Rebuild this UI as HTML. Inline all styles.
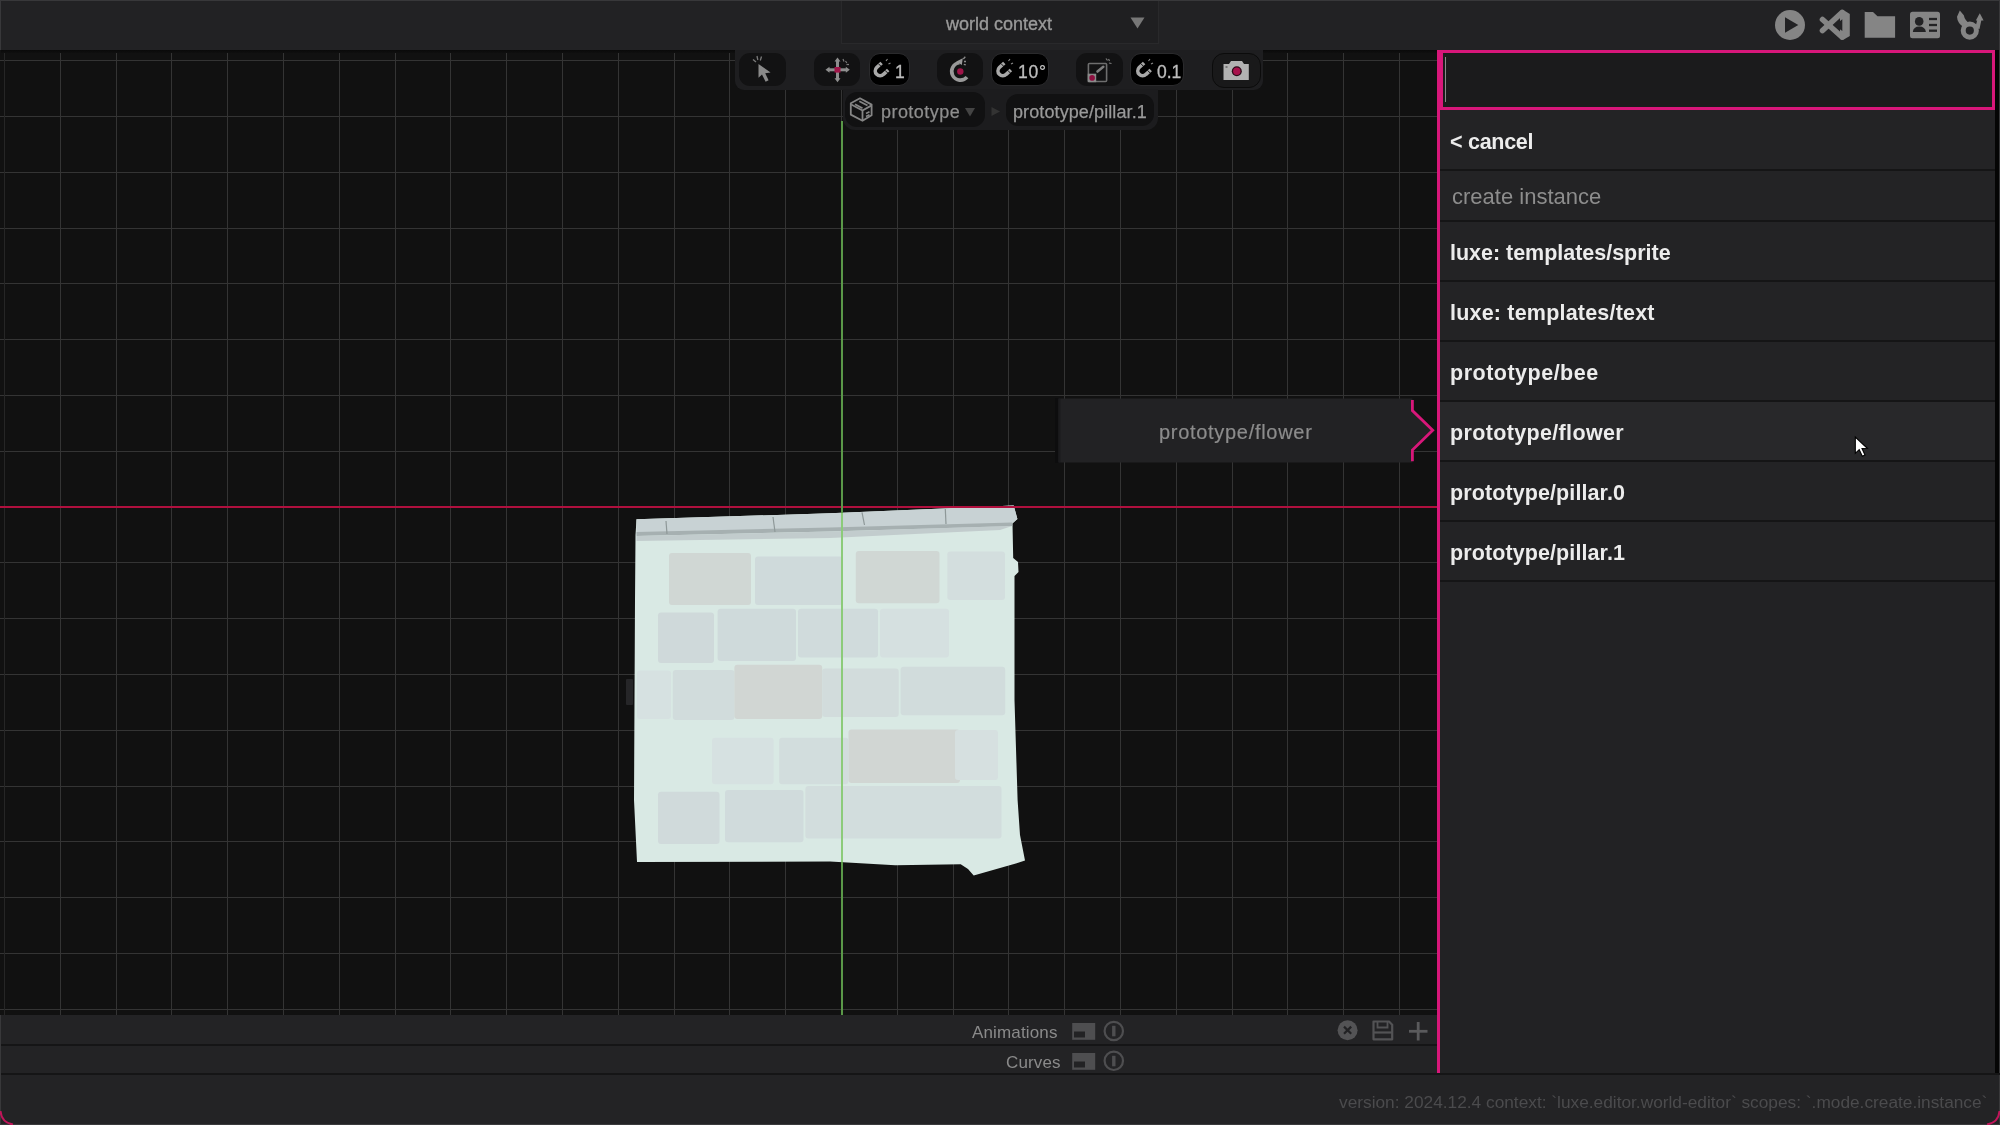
<!DOCTYPE html>
<html><head><meta charset="utf-8">
<style>
html,body{margin:0;padding:0;}
body{width:2000px;height:1125px;overflow:hidden;position:relative;background:#222224;font-family:"Liberation Sans",sans-serif;-webkit-font-smoothing:antialiased;}
.t,.item{will-change:transform;}
.a{position:absolute;}
.t{position:absolute;white-space:pre;line-height:1;}
#topbar{left:0;top:0;width:2000px;height:50px;background:#222224;border-top:1px solid #38383a;box-sizing:border-box;}
#vp{left:0;top:50px;width:1437px;height:965px;background:#111111;overflow:hidden;}
#rp{left:1437px;top:50px;width:558px;height:1024px;background:#222224;}
.row{position:absolute;left:3px;width:555px;background:#232325;}
.sep{position:absolute;left:3px;width:555px;background:#151516;}
.btn{background:#121213;border-radius:11px;}
.blk{background:#000;border:1px solid #2a2a2c;box-sizing:border-box;}
.item{position:absolute;left:13px;color:#ececec;font-weight:bold;font-size:21.5px;letter-spacing:-0.1px;white-space:pre;line-height:1;}
</style></head><body>
<div id="topbar" class="a"></div>
<div class="a" style="left:0;top:0;width:1px;height:1125px;background:#38383a"></div>

<!-- viewport -->
<div id="vp" class="a">
<svg width="1437" height="965" viewBox="0 50 1437 965" style="position:absolute;left:0;top:0" shape-rendering="crispEdges"><g fill="#343434"><rect x="60" y="50" width="1" height="965"/><rect x="116" y="50" width="1" height="965"/><rect x="171" y="50" width="1" height="965"/><rect x="227" y="50" width="1" height="965"/><rect x="283" y="50" width="1" height="965"/><rect x="339" y="50" width="1" height="965"/><rect x="395" y="50" width="1" height="965"/><rect x="450" y="50" width="1" height="965"/><rect x="506" y="50" width="1" height="965"/><rect x="562" y="50" width="1" height="965"/><rect x="618" y="50" width="1" height="965"/><rect x="674" y="50" width="1" height="965"/><rect x="729" y="50" width="1" height="965"/><rect x="785" y="50" width="1" height="965"/><rect x="841" y="50" width="1" height="965"/><rect x="897" y="50" width="1" height="965"/><rect x="953" y="50" width="1" height="965"/><rect x="1008" y="50" width="1" height="965"/><rect x="1064" y="50" width="1" height="965"/><rect x="1120" y="50" width="1" height="965"/><rect x="1176" y="50" width="1" height="965"/><rect x="1232" y="50" width="1" height="965"/><rect x="1287" y="50" width="1" height="965"/><rect x="1343" y="50" width="1" height="965"/><rect x="1399" y="50" width="1" height="965"/><rect x="0" y="60" width="1437" height="1"/><rect x="0" y="116" width="1437" height="1"/><rect x="0" y="172" width="1437" height="1"/><rect x="0" y="228" width="1437" height="1"/><rect x="0" y="283" width="1437" height="1"/><rect x="0" y="339" width="1437" height="1"/><rect x="0" y="395" width="1437" height="1"/><rect x="0" y="451" width="1437" height="1"/><rect x="0" y="562" width="1437" height="1"/><rect x="0" y="618" width="1437" height="1"/><rect x="0" y="674" width="1437" height="1"/><rect x="0" y="730" width="1437" height="1"/><rect x="0" y="786" width="1437" height="1"/><rect x="0" y="841" width="1437" height="1"/><rect x="0" y="897" width="1437" height="1"/><rect x="0" y="953" width="1437" height="1"/><rect x="0" y="1009" width="1437" height="1"/></g></svg>

<div class="a" style="left:4px;top:0;width:1px;height:965px;background:#262626"></div>
<div class="a" style="left:1px;top:0;width:1436px;height:3px;background:linear-gradient(#0a0a0a,#0f0f0f)"></div>
</div>

<!-- pillar -->
<div class="a" style="left:626px;top:678.5px;width:7px;height:26px;background:#262628;border-radius:1px"></div>
<svg class="a" style="left:600px;top:490px" width="450" height="400"><g transform="translate(-600 -490)">
 <path d="M635.5 535 L636.5 519.3 L830 513.3 L1013.7 505.5 L1017.4 519.1 L1012.5 523.5 L1013.2 558 L1018 562 L1018.5 572 L1014.5 576 L1014.5 700 L1017.6 800 L1020 835 L1025 860.5 L1016.7 863.3 L973.7 875.5 L968 869 L960.7 864.3 L895.3 865.2 L830 861.5 L637 862 L634 800 L635 600 Z" fill="#d9e9e4"/>
 <rect x="669" y="553" width="82.0" height="52.0" rx="3" fill="#d0d7d4"/>
 <rect x="755" y="556.5" width="87.7" height="48.5" rx="3" fill="#cfdadb"/>
 <rect x="855.8" y="551" width="83.7" height="52.2" rx="3" fill="#d0d7d4"/>
 <rect x="947.3" y="551.5" width="57.7" height="48.5" rx="3" fill="#d3dede"/>
 <rect x="658" y="612.6" width="56.0" height="50.4" rx="3" fill="#cfd9da"/>
 <rect x="717.6" y="608.8" width="78.4" height="52.2" rx="3" fill="#cfdadb"/>
 <rect x="798" y="608.8" width="80.0" height="48.6" rx="3" fill="#d0dbdc"/>
 <rect x="880" y="608.8" width="69.0" height="48.6" rx="3" fill="#d5e0e0"/>
 <rect x="637" y="670.4" width="34.0" height="48.6" rx="3" fill="#d6e1e1"/>
 <rect x="672.8" y="670" width="61.6" height="50.0" rx="3" fill="#d1dcdc"/>
 <rect x="734.4" y="664.8" width="87.8" height="54.2" rx="3" fill="#d1d6d3"/>
 <rect x="822.2" y="668.6" width="76.5" height="48.4" rx="3" fill="#d2dcdc"/>
 <rect x="900.6" y="666.7" width="104.6" height="48.5" rx="3" fill="#d1dcdc"/>
 <rect x="712" y="737.7" width="61.6" height="46.6" rx="3" fill="#d6e1e1"/>
 <rect x="779.2" y="737.7" width="69.1" height="46.6" rx="3" fill="#d2dddd"/>
 <rect x="848.5" y="729.5" width="111.5" height="53.5" rx="3" fill="#d1d6d3"/>
 <rect x="955" y="730" width="43.0" height="50.0" rx="3" fill="#d6e0e0"/>
 <rect x="658" y="791.8" width="61.5" height="52.2" rx="3" fill="#d0dadb"/>
 <rect x="725" y="790" width="78.5" height="52.2" rx="3" fill="#d0dbdc"/>
 <rect x="805.4" y="786" width="196.1" height="52.5" rx="3" fill="#d2dddd"/>
 <path d="M636.5 519.3 L830 513.3 L1013.7 505.5 L1017.4 519.1 L1012.2 523.3 L1000 529.6 L830 529.6 L636.5 534.5 Z" fill="#c8d2d4"/>
 <path d="M636.5 532 L830 527.5 L1012.2 522.5 L1012.2 526 L830 531.5 L636.5 536 Z" fill="#a6b0b1"/>
 <path d="M636.5 536 L830 531.5 L1012.2 526 L1000 530 L830 538 L636.5 541 Z" fill="#c2cccd"/>
 <g stroke="#8e9898" stroke-width="1.2"><path d="M666 521 L667 534"/><path d="M773 517 L775 532"/><path d="M862 512.3 L864.5 525"/><path d="M945.3 509 L946 524"/></g>
</g></svg>
<div class="a" style="left:0;top:506px;width:1437px;height:2px;background:#b0103e"></div>
<div class="a" style="left:841px;top:121px;width:2px;height:894px;background:#5a9848"></div>
<div class="a" style="left:841px;top:513px;width:2px;height:349px;background:#8ccb7a"></div>

<!-- top bar content -->
<!-- world context dropdown -->
<div class="a" style="left:841px;top:1px;width:318px;height:43px;box-sizing:border-box;border:1px solid #29292b;border-top:none;background:#1f1f21"></div>
<div class="t" style="left:946px;top:14.5px;font-size:18px;color:#9a9a9a;-webkit-text-stroke:0.35px #9a9a9a">world context</div>
<svg class="a" style="left:1130px;top:17px" width="15" height="12"><path d="M0.5 0.5 L14.5 0.5 L7.5 11.5 Z" fill="#777"/></svg>

<!-- top right icons -->
<svg class="a" style="left:1760px;top:0" width="240" height="50"><g transform="translate(-1760 0)">
 <circle cx="1790" cy="25" r="15" fill="#858585"/>
 <path d="M1785 17.3 L1785 32.7 L1798.3 25 Z" fill="#222224"/>
 <g stroke="#858585" stroke-width="5.6" stroke-linecap="round"><path d="M1822.5 19.5 L1842 37"/><path d="M1822.5 30.5 L1842 12.5"/></g>
 <path d="M1840 11 L1843 9.8 L1849.8 14 L1849.8 36 L1843 40 L1840 39 Z" fill="#858585"/>
 <path d="M1842.3 19.3 L1842.3 31 L1834.6 25.2 Z" fill="#222224"/>
 <path d="M1864.7 12 L1873 12 L1877.5 16.2 L1895.1 16.2 L1895.1 37.7 L1864.7 37.7 Z" fill="#858585"/>
 <rect x="1910" y="11.7" width="30" height="26.5" rx="2.5" fill="#858585"/>
 <circle cx="1919.2" cy="21.4" r="4.3" fill="#222224"/>
 <path d="M1912.8 32 Q1913.5 26.5 1919.3 26.5 Q1925.2 26.5 1925.9 32 Z" fill="#222224"/>
 <g stroke="#222224" stroke-width="2.3"><path d="M1929 19 L1937 19"/><path d="M1929 25 L1937 25"/><path d="M1929 30.7 L1937 30.7"/></g>
 <circle cx="1969.8" cy="30.6" r="6.6" stroke="#858585" stroke-width="5" fill="none"/>
 <path d="M1957 16.8 L1959.8 10.6 L1963.8 15.2 Q1964.8 20.3 1969.5 23.2 L1964.5 27.8 Q1957.2 23.5 1957 16.8 Z" fill="#858585"/>
 <path d="M1975.2 28 L1977.5 19 L1981.5 19.5 L1979.5 29 Z" fill="#858585"/>
 <path d="M1975.8 20.5 L1983.6 20.5 L1979.8 13.3 Z" fill="#858585"/>
</g></svg>

<!-- toolbar panel -->
<div class="a" style="left:735px;top:50px;width:528px;height:40px;background:#1e1e20;border-radius:0 0 9px 9px"></div>
<div class="a btn" style="left:739px;top:53px;width:47px;height:33px"></div>
<div class="a btn" style="left:814px;top:53px;width:46px;height:33px"></div>
<div class="a btn blk" style="left:869px;top:53px;width:41px;height:33px"></div>
<div class="a btn" style="left:937px;top:53px;width:46px;height:33px"></div>
<div class="a btn blk" style="left:991px;top:53px;width:58px;height:33px"></div>
<div class="a btn" style="left:1076px;top:53px;width:47px;height:33px"></div>
<div class="a btn blk" style="left:1130px;top:53px;width:54px;height:33px"></div>
<div class="a btn" style="left:1211.5px;top:53px;width:49.5px;height:34.5px;background:#19191a;border:1.5px solid #0b0b0b;box-sizing:border-box;border-radius:12px"></div>
<svg class="a" style="left:0;top:0" width="1300" height="100">
 <g fill="#8a8a8a"><path d="M758.5 64 L758.5 77.8 L762 74.6 L765.6 81.8 L768.6 80.3 L765.2 73.2 L770.6 72.6 Z"/></g>
 <g stroke="#7a7a7a" stroke-width="1.3" fill="none"><path d="M753 59.5 L756 62"/><path d="M757 56 L757.8 60"/><path d="M761.5 56.5 L760.3 60.5"/></g>
 <!-- move -->
 <g stroke="#8e8e8e" stroke-width="3" fill="none"><path d="M828 69.8 L847 69.8"/><path d="M837.5 60.5 L837.5 79.5"/></g>
 <g fill="#8e8e8e"><path d="M825.5 69.8 L829.5 66.8 L829.5 72.8 Z"/><path d="M849.8 69.8 L845.8 66.8 L845.8 72.8 Z"/><path d="M837.5 57.5 L834.5 61.5 L840.5 61.5 Z"/><path d="M837.5 82.3 L834.5 78.3 L840.5 78.3 Z"/></g>
 <rect x="834.5" y="67" width="6" height="5.6" fill="#a01448"/>
 <g stroke="#7a7a7a" stroke-width="1.2" fill="none"><path d="M843 59 L844 61.5"/><path d="M845.5 61 L846.8 63"/><path d="M846.5 64.5 L849 64.5"/></g>
 <!-- rotate -->
 <path d="M959.5 62.8 A8.7 8.7 0 1 0 967 77.1" stroke="#999" stroke-width="3.6" fill="none"/>
 <path d="M956.3 61.5 L962.8 58.3 L961.8 65 Z" fill="#999"/>
 <circle cx="960.3" cy="71.5" r="3.2" fill="#9e1448"/>
 <g stroke="#8a8a8a" stroke-width="1.3" fill="none"><path d="M963.3 59 L965.3 56.8"/><path d="M964 61.5 L966 61.5"/><path d="M963.8 64.3 L965.8 64.8"/></g>
 <!-- scale -->
 <rect x="1088.4" y="63.5" width="18.2" height="18" rx="1" stroke="#6e6e6e" stroke-width="1.6" fill="none"/>
 <rect x="1087.7" y="73.7" width="8.5" height="8.5" fill="#8a8a8a"/>
 <circle cx="1092.1" cy="77.9" r="2.8" fill="#8e1040"/>
 <path d="M1097.5 71.5 L1103.3 66.8" stroke="#7e7e7e" stroke-width="2.6" stroke-linecap="round"/>
 <g stroke="#7a7a7a" stroke-width="1.2" fill="none"><path d="M1106 58.5 L1107.5 60.5"/><path d="M1108.5 59 L1109.5 61"/><path d="M1109 63 L1111.5 63.5"/></g>
 <!-- camera -->
 <path d="M1223.5 64 L1229 64 L1231 61 L1242 61 L1244 64 L1248.8 64 L1248.8 80 L1223.5 80 Z" fill="#b2b2b2"/>
 <circle cx="1236.8" cy="71.3" r="5" fill="#2a0c18"/>
 <circle cx="1236.8" cy="71.3" r="3.7" fill="#a8124c"/>
 <rect x="1225.5" y="66" width="2" height="2" fill="#777"/>
 <!-- magnets -->
 <g stroke="#a8a8a8" stroke-width="3.6" fill="none">
  <path transform="translate(0 0)" d="M881.6 63 L876.7 67.5 A4.8 4.8 0 0 0 883.5 74.3 L888.2 70"/>
  <path transform="translate(122.7 0)" d="M881.6 63 L876.7 67.5 A4.8 4.8 0 0 0 883.5 74.3 L888.2 70"/>
  <path transform="translate(262.5 0)" d="M881.6 63 L876.7 67.5 A4.8 4.8 0 0 0 883.5 74.3 L888.2 70"/>
 </g>
 <g transform="translate(0 0)" stroke="#000" stroke-width="0.9"><path d="M878.3 63.6 L881.5 66.8"/><path d="M885 70.3 L888.2 73.5"/></g>
 <g transform="translate(122.7 0)" stroke="#000" stroke-width="0.9"><path d="M878.3 63.6 L881.5 66.8"/><path d="M885 70.3 L888.2 73.5"/></g>
 <g transform="translate(262.5 0)" stroke="#000" stroke-width="0.9"><path d="M878.3 63.6 L881.5 66.8"/><path d="M885 70.3 L888.2 73.5"/></g>
 <g stroke="#8a8a8a" stroke-width="1.1" fill="none">
  <path d="M886 61 L887.5 59"/><path d="M888.5 64 L890.5 63"/>
  <path d="M1008.5 61 L1010 59"/><path d="M1011 64 L1013 63"/>
  <path d="M1148.5 61 L1150 59"/><path d="M1151 64 L1153 63"/>
 </g>
</svg>
<div class="t" style="left:894.5px;top:63.5px;font-size:17.5px;color:#bdbdbd;-webkit-text-stroke:0.3px #bdbdbd">1</div>
<div class="t" style="left:1017.5px;top:63.5px;font-size:17.5px;letter-spacing:0.8px;color:#bdbdbd;-webkit-text-stroke:0.3px #bdbdbd">10°</div>
<div class="t" style="left:1156.5px;top:63.5px;font-size:17.5px;color:#bdbdbd;-webkit-text-stroke:0.3px #bdbdbd">0.1</div>


<!-- breadcrumb -->
<div class="a" style="left:843px;top:89px;width:315px;height:41px;background:#1c1c1e;border-radius:0 0 12px 12px"></div>
<div class="a" style="left:845px;top:92px;width:140px;height:35px;background:#111112;border-radius:12px"></div>
<div class="a" style="left:1006px;top:94px;width:148px;height:32px;background:#111112;border-radius:12px"></div>
<svg class="a" style="left:0;top:0" width="1000" height="140"><g stroke="#858585" stroke-width="1.8" fill="none" stroke-linejoin="round">
<path d="M860 98.3 L871.6 104.6 L871.6 115.3 L862.5 120.8 L850.8 114.6 L850.8 103.2 Z"/>
<path d="M851.2 104.5 L862.5 110.5 L871.2 105.6"/><path d="M862.5 110.5 L862.5 120.5"/>
<path d="M855 104.2 L862.5 108.2"/><path d="M859.3 101.2 L867.5 105.5"/>
<path d="M866 113.5 L869.5 111.8"/><path d="M866 116.5 L869.5 114.8"/>
</g></svg>
<div class="t" style="left:881px;top:103px;font-size:18px;letter-spacing:0.45px;color:#8e8e8e;-webkit-text-stroke:0.25px #8e8e8e">prototype</div>
<svg class="a" style="left:965px;top:108px" width="11" height="9"><path d="M0 0 L10 0 L5 8.5 Z" fill="#444"/></svg>
<svg class="a" style="left:991px;top:107px" width="10" height="10"><path d="M0.5 0 L9 4.5 L0.5 9 Z" fill="#333"/></svg>
<div class="t" style="left:1013px;top:102.5px;font-size:18px;letter-spacing:0.1px;color:#9a9a9a;-webkit-text-stroke:0.25px #9a9a9a">prototype/pillar.1</div>


<!-- ghost tooltip -->
<div class="a" style="left:1055px;top:398px;width:6px;height:65px;background:#0d0d0e"></div>
<svg class="a" style="left:1050px;top:390px" width="390" height="80"><g transform="translate(-1050 -390)">
 <path d="M1058.5 398.6 L1412.4 398.6 L1412.4 410.6 L1432.7 430.3 L1412.4 450.1 L1412.4 462.4 L1058.5 462.4 Z" fill="#222224"/>
 <path d="M1058.5 398.6 L1060.5 398.6 L1060.5 462.4 L1058.5 462.4 Z" fill="#1b1b1d"/>
 <path d="M1412.4 400 L1412.4 410.6 L1432.7 430.3 L1412.4 450.1 L1412.4 461.2" stroke="#d8177a" stroke-width="2.8" fill="none" stroke-linejoin="miter"/>
</g></svg>
<div class="t" style="left:1159px;top:421.9px;font-size:20px;letter-spacing:0.7px;color:#8c8c8c;-webkit-text-stroke:0.2px #8c8c8c">prototype/flower</div>

<!-- right panel -->
<div id="rp" class="a">
  <div class="a" style="left:0;top:0;width:3px;height:1024px;background:#d8177a"></div>
  <div class="a" style="left:3px;top:0;width:555px;height:60px;box-sizing:border-box;border:3px solid #d8177a;background:#1b1b1c"></div>
  <div class="a" style="left:8px;top:7px;width:1px;height:45px;background:#8a8a8a"></div>
  <div class="row" style="top:60px;height:59px"></div>
  <div class="sep" style="top:119px;height:2px"></div>
  <div class="row" style="top:121px;height:49px"></div>
  <div class="sep" style="top:170px;height:2px"></div>
  <div class="row" style="top:172px;height:58px"></div>
  <div class="sep" style="top:230px;height:2px"></div>
  <div class="row" style="top:232px;height:58px"></div>
  <div class="sep" style="top:290px;height:2px"></div>
  <div class="row" style="top:292px;height:58px"></div>
  <div class="sep" style="top:350px;height:2px"></div>
  <div class="row" style="top:352px;height:58px;background:#28282a"></div>
  <div class="sep" style="top:410px;height:2px"></div>
  <div class="row" style="top:412px;height:58px"></div>
  <div class="sep" style="top:470px;height:2px"></div>
  <div class="row" style="top:472px;height:58px"></div>
  <div class="sep" style="top:530px;height:2px"></div>
  <div class="item" style="top:81.8px;left:13px;letter-spacing:-0.28px">&lt; cancel</div>
  <div class="t" style="top:136px;left:15px;font-size:22px;color:#8d8d8d">create instance</div>
  <div class="item" style="top:193.1px;letter-spacing:-0.02px">luxe: templates/sprite</div>
  <div class="item" style="top:253.1px;letter-spacing:0.2px">luxe: templates/text</div>
  <div class="item" style="top:313.1px;letter-spacing:0.5px">prototype/bee</div>
  <div class="item" style="top:373.1px;letter-spacing:0.35px">prototype/flower</div>
  <div class="item" style="top:433.1px;letter-spacing:0.1px">prototype/pillar.0</div>
  <div class="item" style="top:493.1px;letter-spacing:0.1px">prototype/pillar.1</div>
</div>
<div class="a" style="left:1995px;top:50px;width:4px;height:1025px;background:#050505"></div>
<div class="a" style="left:1999px;top:0;width:1px;height:1125px;background:#38383a"></div>

<!-- bottom bars -->
<div class="a" style="left:1px;top:1015px;width:1436px;height:29px;background:#232325"></div>
<div class="a" style="left:1px;top:1044px;width:1436px;height:2px;background:#151516"></div>
<div class="a" style="left:1px;top:1046px;width:1436px;height:27px;background:#232325"></div>
<div class="a" style="left:1px;top:1073px;width:1999px;height:2px;background:#151516"></div>
<div class="a" style="left:1px;top:1075px;width:1998px;height:50px;background:#232325"></div>
<!-- bottom bar content -->
<div class="t" style="left:972px;top:1023.8px;font-size:17px;letter-spacing:0.15px;color:#8a8a8a">Animations</div>
<div class="t" style="left:1005.5px;top:1054.3px;font-size:17px;letter-spacing:0.15px;color:#8a8a8a">Curves</div>
<svg class="a" style="left:0;top:0" width="1440" height="1125">
 <g>
  <rect x="1072.2" y="1023" width="23" height="16.8" fill="#4e4e50"/>
  <rect x="1074" y="1031.5" width="11" height="6" fill="#222224"/>
  <circle cx="1113.8" cy="1031" r="9.2" stroke="#4e4e50" stroke-width="2.2" fill="none"/>
  <rect x="1112.1" y="1025.8" width="3.4" height="10.5" fill="#4e4e50"/>
  <rect x="1072.2" y="1053" width="23" height="16.8" fill="#4e4e50"/>
  <rect x="1074" y="1061.5" width="11" height="6" fill="#222224"/>
  <circle cx="1113.8" cy="1060.8" r="9.2" stroke="#4e4e50" stroke-width="2.2" fill="none"/>
  <rect x="1112.1" y="1055.8" width="3.4" height="10.5" fill="#4e4e50"/>
 </g>
 <circle cx="1347.6" cy="1030.2" r="10" fill="#535355"/>
 <g stroke="#222224" stroke-width="2.2"><path d="M1344 1026.6 L1351.2 1033.8"/><path d="M1351.2 1026.6 L1344 1033.8"/></g>
 <path d="M1373.5 1021.5 L1389 1021.5 L1392.2 1024.7 L1392.2 1039.3 L1373.5 1039.3 Z" stroke="#535355" stroke-width="2.2" fill="none" stroke-linejoin="round"/>
 <path d="M1377.5 1022 L1377.5 1027.5 L1387.5 1027.5 L1387.5 1022" stroke="#535355" stroke-width="1.8" fill="none"/>
 <path d="M1373.5 1032.5 L1392.2 1032.5" stroke="#535355" stroke-width="2.2"/>
 <g stroke="#5a5a5c" stroke-width="2.8"><path d="M1409 1031.3 L1427.5 1031.3"/><path d="M1418.2 1022 L1418.2 1040.5"/></g>
</svg>
<div class="t" style="left:1339px;top:1093.6px;font-size:17.3px;color:#4b4b4d">version: 2024.12.4 context: `luxe.editor.world-editor` scopes: `.mode.create.instance`</div>

<!-- frame edges -->
<div class="a" style="left:0;top:1124px;width:2000px;height:1px;background:#3a3a3c"></div>
<svg class="a" style="left:0;top:1110px" width="14" height="15"><path d="M0.5 1 Q1.5 12.5 13 14.5" stroke="#c0155a" stroke-width="2" fill="none"/></svg>
<svg class="a" style="left:1986px;top:1110px" width="14" height="15"><path d="M13.5 1 Q12.5 12.5 1 14.5" stroke="#c0155a" stroke-width="2" fill="none"/></svg>
<!-- mouse cursor -->
<svg class="a" style="left:1850px;top:432px" width="24" height="30"><g transform="translate(-1850 -432)">
<path d="M1855.3 437 L1855.3 453.3 L1859.2 449.6 L1862.3 456.2 L1865 455 L1862 448.5 L1867.3 448.3 Z" fill="#ffffff" stroke="#000" stroke-width="1.1" stroke-linejoin="miter"/>
</g></svg>
</body></html>
